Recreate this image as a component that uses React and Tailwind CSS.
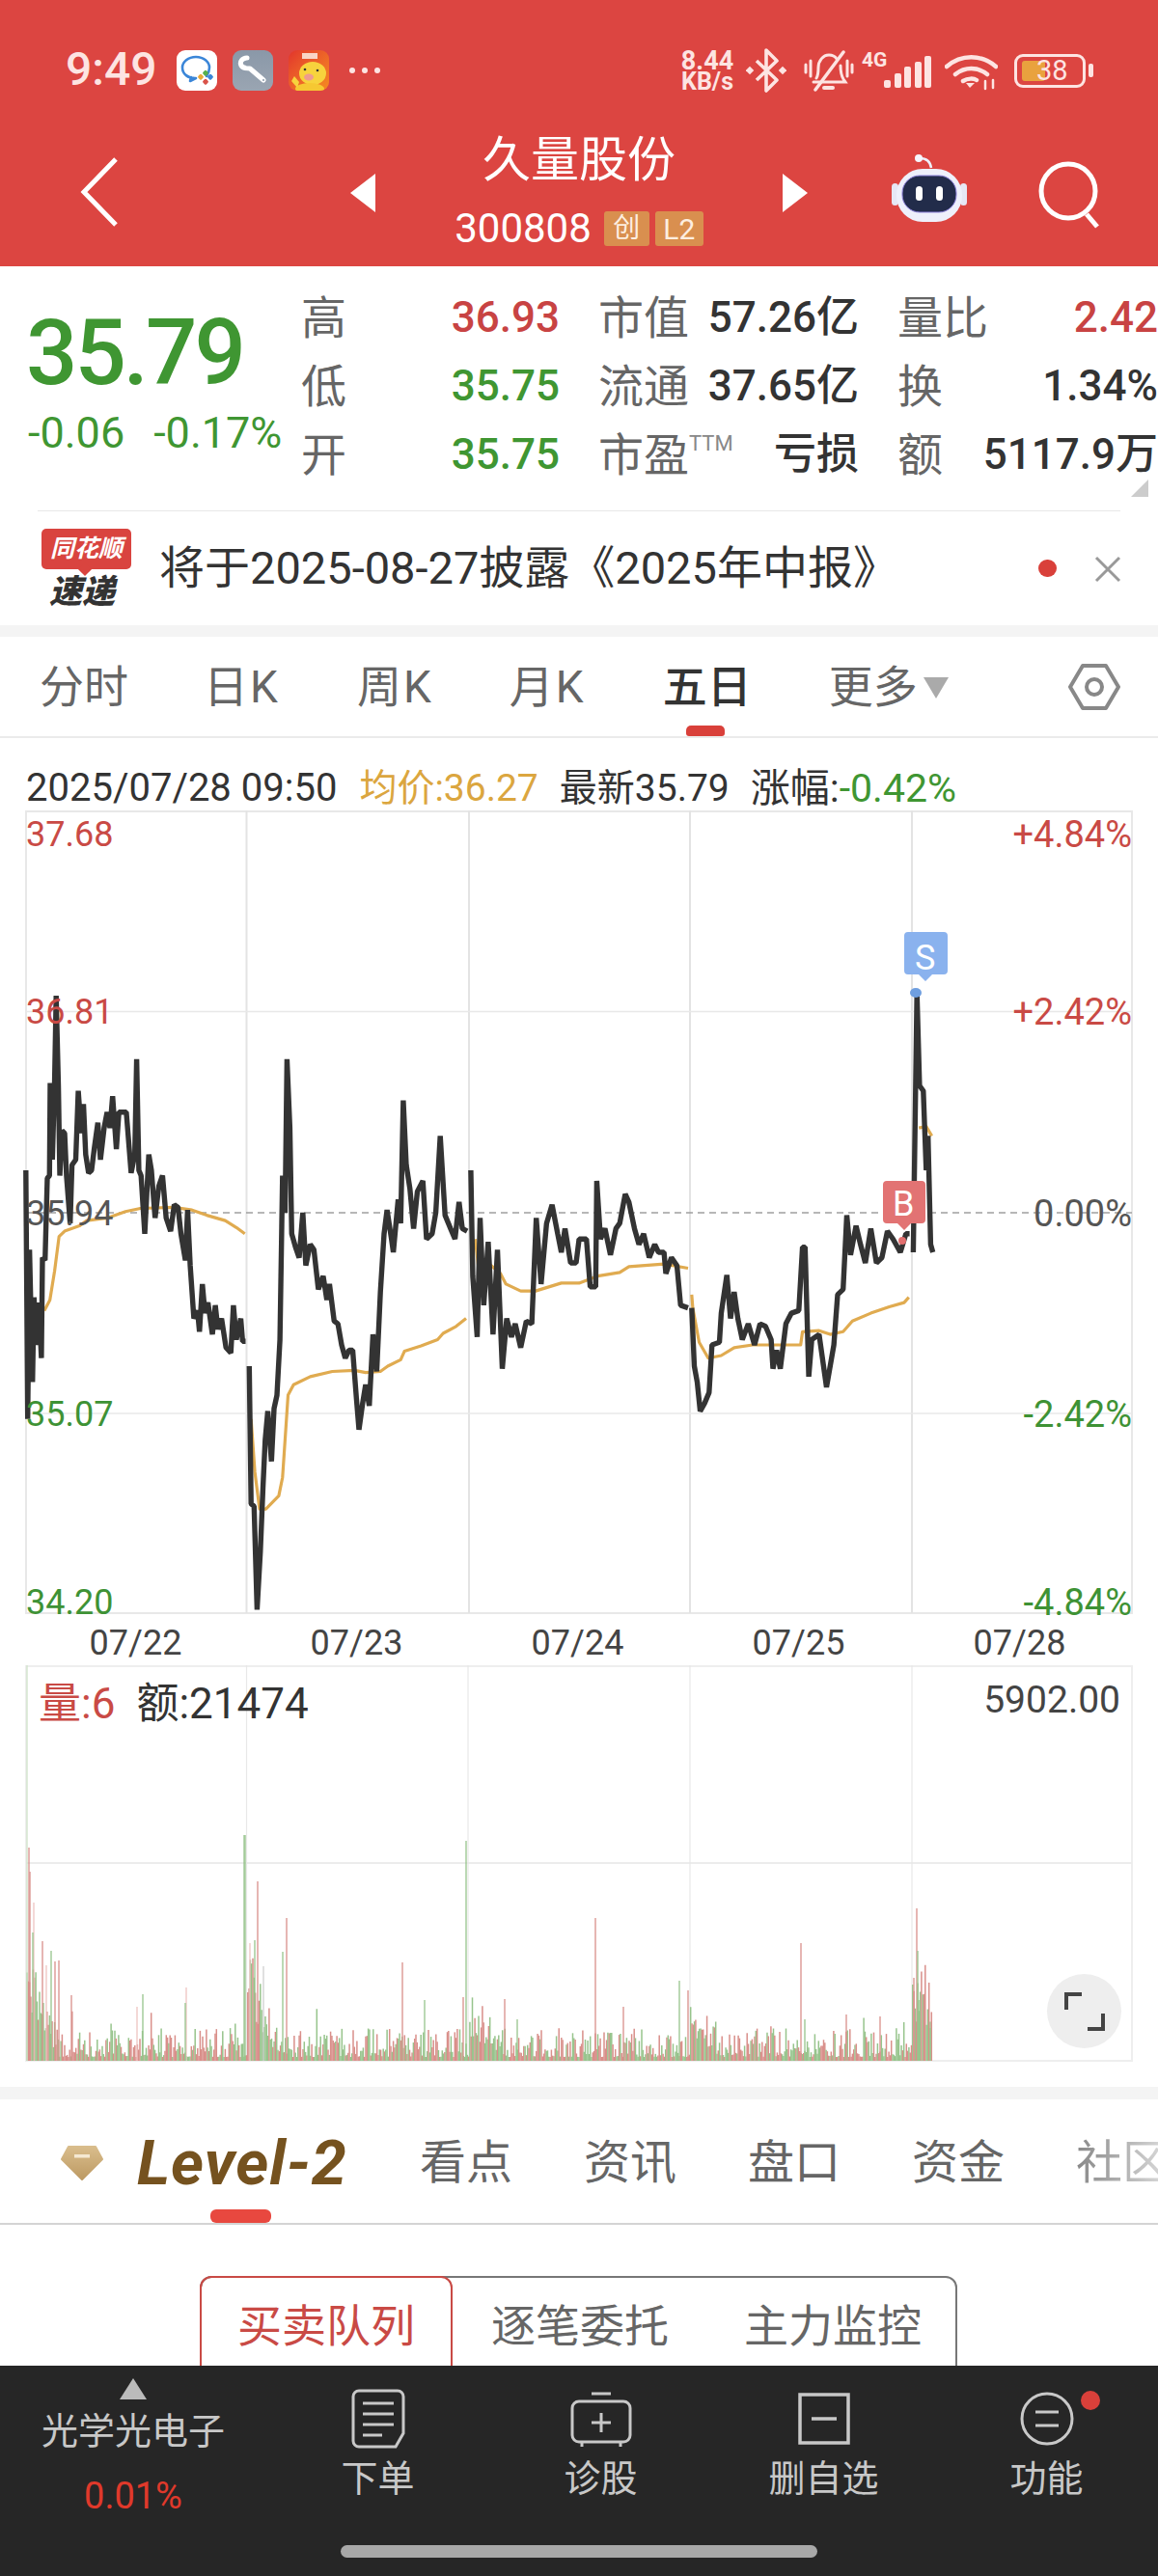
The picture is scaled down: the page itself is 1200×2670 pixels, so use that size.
import React from 'react';

const D1 = '70,680 75,1150 80,830 88,1080 92,920 100,1010 105,930 112,1035 115,845 122,850 128,695 134,690 136,515 142,660 148,510 152,350 158,520 162,690 168,605 175,610 180,690 190,780 195,670 205,660 212,530 220,610 226,555 232,650 240,685 248,680 255,640 265,590 272,660 282,600 290,570 298,600 305,540 315,640 322,570 335,570 342,570 355,685 365,650 370,470 376,680 382,690 392,800 403,650 410,680 420,770 430,710 440,690 450,770 462,795 472,745 482,750 490,800 502,850 508,755 515,860 525,960 535,945 540,985 548,895 555,950 563,930 575,990 583,935 590,980 600,960 612,1015 625,1025 632,935 640,1000 652,960 657,1003 665,1003';
const D2 = '675,1050 680,1310 688,1315 696,1510 705,1400 712,1280 718,1190 725,1135 735,1230 742,1130 750,1105 758,1000 765,690 772,760 777,470 785,600 790,800 800,825 810,845 820,760 828,860 840,820 850,830 862,905 875,880 885,925 892,895 905,965 915,970 925,1010 935,1035 945,1020 955,1020 965,1110 972,1170 982,1120 990,1085 1000,1125 1010,990 1020,1060 1030,910 1040,800 1048,755 1060,810 1065,835 1078,735 1085,780 1092,548 1100,670 1110,715 1120,790 1130,720 1145,700 1155,810 1170,800 1180,760 1192,615 1205,765 1220,790 1232,810 1243,740 1252,790 1265,795';
const D3 = '1275,680 1280,880 1292,995 1300,770 1310,935 1322,815 1335,990 1347,830 1360,1055 1372,960 1385,995 1395,970 1410,1015 1425,965 1440,970 1452,770 1465,895 1480,780 1495,745 1510,800 1520,835 1530,790 1545,855 1560,855 1568,810 1578,810 1588,810 1598,900 1613,900 1616,700 1626,810 1638,790 1653,840 1668,790 1678,780 1693,725 1703,740 1718,790 1730,820 1743,800 1758,845 1773,820 1783,835 1798,835 1803,875 1818,845 1833,860 1843,935 1863,940';
const D4 = '1873,940 1880,1050 1888,1080 1896,1135 1908,1120 1920,1100 1928,1010 1948,1005 1953,950 1968,878 1978,960 1988,910 1998,960 2010,1000 2026,970 2043,1010 2058,970 2073,975 2088,1000 2093,1055 2103,1020 2113,1055 2128,970 2143,950 2163,945 2173,825 2180,825 2190,1070 2198,1000 2218,990 2238,1090 2258,1010 2268,915 2283,905 2293,765 2303,840 2318,785 2330,820 2343,855 2358,790 2373,855 2388,845 2403,795 2418,810 2438,835 2453,800 2463,800';
const D5 = '2473,835 2483,345 2490,520 2500,530 2508,680 2513,615 2520,820 2526,835';
const A1 = '120,945 135,925 148,870 160,805 175,795 215,785 235,775 290,770 340,758 380,752 470,750 520,755 560,765 610,775 640,788 663,800';
const A2 = '680,1150 690,1250 703,1320 720,1320 755,1295 765,1260 780,1105 795,1085 840,1070 900,1060 960,1058 990,1062 1030,1060 1050,1050 1085,1038 1095,1022 1140,1012 1185,1000 1200,988 1235,975 1262,960';
const A3 = '1287,810 1295,860 1330,860 1355,875 1370,895 1410,908 1450,908 1520,893 1568,893 1618,880 1678,873 1703,862 1798,857 1863,865';
const A4 = '1873,915 1876,940 1893,1005 1918,1035 1953,1030 1988,1015 2038,1010 2168,1010 2173,985 2218,983 2248,990 2283,985 2308,965 2358,950 2408,938 2448,930 2461,920';
const A5 = '2488,600 2508,597 2523,615';

// zoom crop coords -> page coords
const toPage = (s) =>
  s.split(' ').map((p) => {
    const [x, y] = p.split(',').map(Number);
    return `${(x / 2.613).toFixed(1)},${(840 + y / 1.823).toFixed(1)}`;
  }).join(' ');

const spikes = [
  [28, 1726, 'l'], [30, 1915, 'r'], [31, 1940, 'r'], [35, 1972, 'p'], [34, 2003, 'g'], [44, 2012, 'r'], [53, 2022, 'g'], [48, 2037, 'p'],
  [57, 2033, 'r'], [61, 2032, 'r'], [74, 2068, 'r'], [148, 2067, 'g'], [142, 2080, 'p'], [193, 2060, 'p'], [192, 2076, 'g'],
  [253, 1902, 'g'], [254, 1902, 'g'], [267, 1950, 'r'], [259, 2014, 'p'], [264, 2011, 'g'], [273, 2038, 'x'], [297, 1988, 'r'], [293, 2023, 'g'],
  [417, 2034, 'r'], [440, 2073, 'g'], [483, 1908, 'g'], [480, 2070, 'r'], [523, 2072, 'r'], [536, 2093, 'g'], [617, 1988, 'r'], [646, 2080, 'r'],
  [704, 2053, 'g'], [713, 2063, 'r'], [830, 2014, 'r'], [834, 2093, 'g'], [877, 2088, 'r'], [912, 2090, 'r'],
  [950, 1978, 'r'], [951, 2022, 'g'], [947, 2050, 'r'], [952, 2073, 'g'], [964, 2102, 'g'],
];

const volumeBars = () => {
  const bars = [];
  let seed = 7;
  const rnd = () => {
    seed = (seed * 16807) % 2147483647;
    return seed / 2147483647;
  };
  const starts = [27, 256, 486, 715, 945];
  for (let x = 28; x < 966; x += 1.3) {
    const day = starts.filter((s) => s <= x).pop();
    const near = x - day;
    let decay = Math.max(0, 1 - near / 34);
    if (day === 945) decay = 0.8;
    if (day === 715 || day === 486) decay *= 0.5;
    const r = rnd();
    let h = 4 + r * r * 30 + decay * (35 + rnd() * 60);
    if (rnd() > 0.95) h += rnd() * 25;
    bars.push([x, h, rnd() > 0.5 ? 'r' : 'g']);
  }
  return bars;
};

const volColor = { r: '#d98f8a', g: '#97c48c', p: '#eec4c1', x: '#cfcfcf', l: '#cfe3c9' };

const MainChart = () => (
  <div className="relative h-[833px]">
    <svg width="1200" height="833" viewBox="0 840 1200 833" className="absolute inset-0">
      <rect x="27" y="841" width="1146" height="831" fill="none" stroke="#e8e8e8" strokeWidth="2" />
      {[255.5, 486, 715, 945].map((x) => (
        <line key={x} x1={x} x2={x} y1="840" y2="1672" stroke="#e3e3e3" strokeWidth="2" />
      ))}
      <line x1="27" x2="1173" y1="1048.5" y2="1048.5" stroke="#e8e8e8" strokeWidth="1.5" />
      <line x1="27" x2="1173" y1="1465" y2="1465" stroke="#e8e8e8" strokeWidth="1.5" />
      <line x1="27" x2="1173" y1="1257" y2="1257" stroke="#a0a0a0" strokeWidth="1.5" strokeDasharray="7 5" />
      {[A1, A2, A3, A4, A5].map((s, i) => (
        <polyline key={i} points={toPage(s)} fill="none" stroke="#e0ab50" strokeWidth="3.2" strokeLinejoin="round" />
      ))}
      {[D1, D2, D3, D4, D5].map((s, i) => (
        <polyline key={i} points={toPage(s)} fill="none" stroke="#333333" strokeWidth="5.4" strokeLinejoin="bevel" />
      ))}
      <ellipse cx="949" cy="1029" rx="6" ry="5" fill="#6f9fe0" />
      <circle cx="935" cy="1286" r="4" fill="#e26f6f" />
      <path d="M941 966h37a4 4 0 0 1 4 4v36a4 4 0 0 1-4 4h-12l-7 7-7-7h-11a4 4 0 0 1-4-4v-36a4 4 0 0 1 4-4z" fill="#8ab2ee" />
      <path d="M919 1224h36a4 4 0 0 1 4 4v36a4 4 0 0 1-4 4h-11l-7 7-7-7h-11a4 4 0 0 1-4-4v-36a4 4 0 0 1 4-4z" fill="#e27373" />
    </svg>
    <span className="absolute left-[948px] top-[131px] text-[36px] leading-[44px] text-white">S</span>
    <span className="absolute left-[925px] top-[386px] text-[36px] leading-[44px] text-white">B</span>
    <span className="absolute left-[27px] top-[4px] text-[36px] leading-[42px] text-[#c94a45]">37.68</span>
    <span className="absolute left-[27px] top-[188px] text-[36px] leading-[42px] text-[#c94a45]">36.81</span>
    <span className="absolute left-[27px] top-[397px] text-[36px] leading-[42px] text-[#555]">35.94</span>
    <span className="absolute left-[27px] top-[605px] text-[36px] leading-[42px] text-[#3e9235]">35.07</span>
    <span className="absolute left-[27px] top-[800px] text-[36px] leading-[42px] text-[#3e9235]">34.20</span>
    <span className="absolute right-[27px] top-[4px] text-[38px] leading-[42px] text-[#c94a45]">+4.84%</span>
    <span className="absolute right-[27px] top-[188px] text-[38px] leading-[42px] text-[#c94a45]">+2.42%</span>
    <span className="absolute right-[27px] top-[397px] text-[38px] leading-[42px] text-[#555]">0.00%</span>
    <span className="absolute right-[27px] top-[605px] text-[38px] leading-[42px] text-[#3e9235]">-2.42%</span>
    <span className="absolute right-[27px] top-[800px] text-[38px] leading-[42px] text-[#3e9235]">-4.84%</span>
  </div>
);

const VolumeChart = () => (
  <div className="relative h-[411px]">
    <svg width="1200" height="411" viewBox="0 1726 1200 411" className="absolute inset-0">
      <rect x="27" y="1727" width="1146" height="409" fill="none" stroke="#eeeeee" strokeWidth="2" />
      <line x1="27" x2="1173" y1="1931" y2="1931" stroke="#ececec" strokeWidth="2" />
      {[255.5, 485, 715, 945].map((x) => (
        <line key={x} x1={x} x2={x} y1="1726" y2="2136" stroke="#e8e8e8" strokeWidth="1.2" />
      ))}
      {volumeBars().map(([x, h, c], i) => (
        <line key={i} x1={x} x2={x} y1="2136" y2={2136 - h} stroke={volColor[c]} strokeWidth="1.5" />
      ))}
      {spikes.map(([x, y, c], i) => (
        <line key={i} x1={x} x2={x} y1="2136" y2={y} stroke={volColor[c]} strokeWidth="1.3" />
      ))}
    </svg>
    <div className="absolute left-[40px] top-[15px] flex items-center text-[44px] leading-[50px]">
      <span className="text-[#c94a45]">量:6</span>
      <span className="ml-[22px] text-[#333]">额:21474</span>
    </div>
    <span className="absolute right-[39px] top-[14px] text-[39px] leading-[44px] text-[#444]">5902.00</span>
    <div className="absolute left-[1085px] top-[320px] flex h-[77px] w-[77px] items-center justify-center rounded-full bg-[#eeeeee]">
      <svg width="44" height="44" viewBox="0 0 44 44" fill="none" stroke="#444" strokeWidth="4">
        <path d="M19 4H3v16M25 40h16V24" />
      </svg>
    </div>
  </div>
);

const StatusBar = () => (
  <div className="flex h-[142px] items-start pt-[52px] text-[#fde4e2]">
    <span className="ml-[68px] mt-[-3px] w-[115px] text-[48px] font-medium leading-[46px]">9:49</span>
    <div className="h-[42px] w-[42px] overflow-hidden rounded-[9px] bg-white">
      <svg width="42" height="42" viewBox="0 0 42 42" fill="none">
        <path d="M31 27c2-3 3-5 3-9 0-6-6-11-14-11S6 12 6 18c0 7 6 11 13 11l1 0-6 3 1-4" stroke="#3b86d8" strokeWidth="2.600" strokeLinecap="round" strokeLinejoin="round" />
        <rect x="23" y="25" width="5" height="5" rx="1.500" fill="#e9a93a" transform="rotate(45 25 27)" />
        <rect x="28" y="21" width="5" height="5" rx="1.500" fill="#57b04c" transform="rotate(45 30 23)" />
        <rect x="33" y="25" width="5" height="5" rx="1.500" fill="#3b86d8" transform="rotate(45 35 27)" />
        <rect x="28" y="30" width="5" height="5" rx="1.500" fill="#d9534a" transform="rotate(45 30 32)" />
      </svg>
    </div>
    <div className="ml-[16px] h-[42px] w-[42px] overflow-hidden rounded-[9px] bg-gradient-to-b from-[#8a98a8] to-[#9aa5b2]">
      <svg width="42" height="42" viewBox="0 0 42 42" fill="none">
        <path d="M15 8c-5 0-8 4-6 8 2 3 6 3 9 3l14 12" stroke="#fff" strokeWidth="5" strokeLinecap="round" strokeLinejoin="round" />
        <circle cx="32" cy="31" r="1" fill="#8a98a8" />
      </svg>
    </div>
    <div className="ml-[16px] h-[42px] w-[42px] overflow-hidden rounded-[9px] bg-gradient-to-br from-[#e2332c] to-[#f58a1f]">
      <svg width="42" height="42" viewBox="0 0 42 42">
        <rect x="14" y="3" width="16" height="6" fill="#fbe3d5" opacity="0.9" />
        <ellipse cx="25" cy="24" rx="14" ry="12" fill="#f7d33d" />
        <ellipse cx="22" cy="40" rx="15" ry="6" fill="#f6c832" />
        <path d="M3 32l3-5 5 6-2 6z" fill="#f7d33d" />
        <ellipse cx="21" cy="28" rx="5" ry="3.500" fill="#ee9c8e" />
        <circle cx="17" cy="20" r="1.300" fill="#333" />
        <circle cx="30" cy="21" r="1.300" fill="#333" />
      </svg>
    </div>
    <svg width="34" height="8" viewBox="0 0 34 8" className="ml-[20px] mt-[17px]" fill="#fde4e2">
      <circle cx="4" cy="4" r="3" />
      <circle cx="17" cy="4" r="3" />
      <circle cx="30" cy="4" r="3" />
    </svg>

    <div className="ml-[309px] flex w-[58px] flex-col items-center">
      <span className="text-[27px] font-bold leading-[22px]">8.44</span>
      <span className="text-[25px] font-bold leading-[22px]">KB/s</span>
    </div>
    <svg width="42" height="46" viewBox="0 0 42 46" fill="none" stroke="#fde4e2" strokeWidth="3.600" className="ml-[11px] mt-[-2px]">
      <path d="M11 13l21 20-11 11V2l11 11-21 20" strokeLinejoin="round" />
      <rect x="1" y="20" width="6" height="6" fill="#fde4e2" stroke="none" transform="rotate(45 4 23)" />
      <rect x="35" y="20" width="6" height="6" fill="#fde4e2" stroke="none" transform="rotate(45 38 23)" />
    </svg>
    <svg width="52" height="44" viewBox="0 0 52 44" fill="none" stroke="#fde4e2" strokeWidth="3" strokeLinecap="round" className="ml-[18px]">
      <path d="M13 29c2-3 2-6 2-11 0-7 5-13 11-13 3 0 6 1 8 4M38 16c0 5 0 9 3 14l2 3H10" />
      <path d="M21 39h9" strokeWidth="4" />
      <path d="M41 2L12 41" strokeWidth="3.500" />
      <path d="M2 15v8M7 11v16M45 11v16M50 15v8" />
    </svg>
    <div className="relative ml-[8px] h-[44px] w-[72px]">
      <span className="absolute left-[0px] top-[0px] text-[21px] font-bold leading-[20px]">4G</span>
      <div className="absolute bottom-[5px] right-[0px] flex items-end gap-[3.500px]">
        <div className="h-[8px] w-[7px] rounded-[2px] bg-[#fde4e2]" />
        <div className="h-[15px] w-[7px] rounded-[2px] bg-[#fde4e2]" />
        <div className="h-[22px] w-[7px] rounded-[2px] bg-[#fde4e2]" />
        <div className="h-[27px] w-[7px] rounded-[2px] bg-[#fde4e2]" />
        <div className="h-[33px] w-[7px] rounded-[2px] bg-[#fde4e2]" />
      </div>
    </div>
    <svg width="55" height="38" viewBox="0 0 55 38" fill="none" stroke="#fde4e2" strokeWidth="4.500" strokeLinecap="round" className="ml-[14px] mt-[4px]">
      <path d="M2 13c15-13 36-13 51 0M11 21c10-8 23-8 33 0M19 28c5-3 11-3 14-1" />
      <path d="M22 30l4 5 5-5z" fill="#fde4e2" stroke="none" />
      <path d="M42 28v8M50 27v8" strokeWidth="2.500" />
    </svg>
    <div className="relative ml-[17px] mt-[4px] h-[35px] w-[74px] rounded-[9px] border-[3px] border-[#fde4e2]">
      <div className="absolute bottom-[4px] left-[5px] top-[4px] w-[24px] rounded-[3px] bg-[#e9a23e]" />
      <span className="absolute left-[20px] top-[-1px] text-[29px] leading-[30px]">38</span>
      <div className="absolute right-[-11px] top-[7px] h-[14px] w-[5px] rounded-[2px] bg-[#fde4e2]" />
    </div>
  </div>
);

const NavBar = () => (
  <div className="relative flex h-[134px] items-start justify-center">
    <svg width="44" height="74" viewBox="0 0 44 74" fill="none" stroke="#fff" strokeWidth="5" className="absolute left-[81px] top-[20px]">
      <path d="M39 3L6 37l33 34" />
    </svg>
    <svg width="26" height="40" viewBox="0 0 26 40" className="absolute left-[363px] top-[38px]" fill="#fff"><path d="M26 0v40L0 20z" /></svg>
    <svg width="26" height="40" viewBox="0 0 26 40" className="absolute left-[811px] top-[38px]" fill="#fff"><path d="M0 0v40l26-20z" /></svg>
    <div className="mt-[-7px] flex flex-col items-center">
      <span className="text-[50px] leading-[62px] text-white">久量股份</span>
      <div className="mt-[21px] flex items-center">
        <span className="text-[42px] leading-[38px] text-white">300808</span>
        <span className="ml-[13px] flex h-[36px] w-[47px] items-center justify-center rounded-[3px] bg-[#d98f4f] text-[28px] text-[#fdeee0]">创</span>
        <span className="ml-[6px] flex h-[36px] w-[50px] items-center justify-center rounded-[3px] bg-[#d98f4f] text-[30px] text-[#fdeee0]">L2</span>
      </div>
    </div>
    <svg width="86" height="74" viewBox="0 0 86 74" className="absolute left-[920px] top-[18px]">
      <path d="M33 4c7 0 11 3 12 10" fill="none" stroke="#eef0fb" strokeWidth="2.500" />
      <circle cx="32" cy="4" r="4" fill="#f6f6fd" />
      <rect x="4" y="30" width="7" height="23" rx="3.500" fill="#e6e7f5" />
      <rect x="75" y="30" width="7" height="23" rx="3.500" fill="#e6e7f5" />
      <rect x="9" y="15" width="68" height="55" rx="27" fill="#eef0fb" />
      <rect x="15" y="22" width="56" height="38" rx="18" fill="#222c4a" stroke="#8f84dc" strokeWidth="1" />
      <rect x="29" y="33" width="7" height="15" rx="3.500" fill="#fff" />
      <rect x="50" y="33" width="7" height="15" rx="3.500" fill="#fff" />
    </svg>
    <svg width="68" height="72" viewBox="0 0 68 72" fill="none" stroke="#fff" strokeWidth="5" className="absolute left-[1075px] top-[23px]">
      <circle cx="32" cy="33" r="28" />
      <path d="M51 57l11 13" />
    </svg>
  </div>
);

const Label = ({ children }) => <span className="whitespace-nowrap text-[47px] leading-[71px] text-[#666]">{children}</span>;
const Value = ({ color, children }) => <span className={`text-[44px] font-medium leading-[71px] ${color}`}>{children}</span>;

const QuoteSection = () => (
  <div className="relative h-[254px] bg-white">
    <div className="flex h-[237px] pt-[18px]">
      <div className="ml-[27px] w-[285px] pt-[24px]">
        <div className="text-[94px] font-medium leading-[96px] tracking-[-3px] text-[#3f9632]">35.79</div>
        <div className="ml-[2px] mt-[12px] flex whitespace-nowrap text-[45px] leading-[46px] text-[#3f9632]">
          <span>-0.06</span>
          <span className="ml-[30px]">-0.17%</span>
        </div>
      </div>
      <div className="grid flex-1 grid-cols-[268px_350px_270px] grid-rows-[71px_71px_71px]">
        <div className="flex justify-between">
          <Label>高</Label>
          <Value color="text-[#c84343]">36.93</Value>
        </div>
        <div className="ml-[40px] flex justify-between pr-[40px]">
          <Label>市值</Label>
          <Value color="text-[#333]">57.26亿</Value>
        </div>
        <div className="flex justify-between">
          <Label>量比</Label>
          <Value color="text-[#c84343]">2.42</Value>
        </div>
        <div className="flex justify-between">
          <Label>低</Label>
          <Value color="text-[#3f9632]">35.75</Value>
        </div>
        <div className="ml-[40px] flex justify-between pr-[40px]">
          <Label>流通</Label>
          <Value color="text-[#333]">37.65亿</Value>
        </div>
        <div className="flex justify-between">
          <Label>换</Label>
          <Value color="text-[#333]">1.34%</Value>
        </div>
        <div className="flex justify-between">
          <Label>开</Label>
          <Value color="text-[#3f9632]">35.75</Value>
        </div>
        <div className="ml-[40px] flex justify-between pr-[40px]">
          <span className="flex items-start">
            <Label>市盈</Label>
            <span className="mt-[12px] text-[22px] leading-[24px] text-[#888]">TTM</span>
          </span>
          <Value color="text-[#333]">亏损</Value>
        </div>
        <div className="flex justify-between">
          <Label>额</Label>
          <Value color="text-[#333]">5117.9万</Value>
        </div>
      </div>
    </div>
    <div className="absolute bottom-[15px] right-[10px] h-0 w-0 border-b-[18px] border-l-[18px] border-b-[#cccccc] border-l-transparent" />
    <div className="absolute bottom-[0px] left-[39px] right-[39px] h-[1px] bg-[#e8e8e8]" />
  </div>
);

const Notice = () => (
  <div className="relative flex h-[118px] items-center bg-white pl-[43px]">
    <div className="flex w-[93px] flex-col items-start">
      <div className="relative flex h-[42px] w-[93px] items-center justify-center rounded-[5px] bg-[#d9443f] text-[25px] font-bold italic leading-[42px] text-white">
        同花顺
        <div className="absolute bottom-[-5px] left-[40px] h-[10px] w-[10px] rotate-45 bg-[#d9443f]" />
      </div>
      <div className="mt-[6px] pl-[8px] text-[34px] font-black italic leading-[34px] text-[#333]">速递</div>
    </div>
    <span className="ml-[29px] text-[47px] leading-[60px] text-[#333]">将于2025-08-27披露《2025年中报》</span>
    <div className="absolute left-[1076px] top-[50px] h-[18px] w-[19px] rounded-full bg-[#d9403a]" />
    <svg width="28" height="28" viewBox="0 0 28 28" fill="none" stroke="#999" strokeWidth="3" className="absolute left-[1134px] top-[46px]">
      <path d="M2 2l24 24M26 2L2 26" />
    </svg>
  </div>
);

const PeriodTabs = () => (
  <div className="relative h-[105px] border-b-2 border-[#ebebeb] bg-white text-[46px] leading-[105px] text-[#666]">
    <div className="flex h-[103px]">
      <span className="ml-[41px]">分时</span>
      <span className="ml-[78px] tracking-[2px]">日K</span>
      <span className="ml-[80px] tracking-[2px]">周K</span>
      <span className="ml-[79px] tracking-[2px]">月K</span>
      <span className="ml-[80px] font-medium text-[#333]">五日</span>
      <span className="ml-[80px]">更多</span>
      <svg width="26" height="22" viewBox="0 0 26 22" className="ml-[6px] mt-[42px]" fill="#aaa"><path d="M0 0h26L13 22z" /></svg>
    </div>
    <div className="absolute bottom-[0px] left-[711px] h-[11px] w-[40px] rounded-t-[5px] rounded-b-[3px] bg-[#d9403a]" />
    <svg width="54" height="50" viewBox="0 0 54 50" fill="none" stroke="#888" strokeWidth="4" className="absolute left-[1107px] top-[27px]">
      <path d="M15 3h24l13 22-13 22H15L2 25z" strokeLinejoin="round" />
      <circle cx="27" cy="25" r="8" />
    </svg>
  </div>
);

const InfoRow = () => (
  <div className="flex h-[75px] items-start pl-[27px] pt-[27px] text-[39px] leading-[50px] text-[#333]">
    <span className="text-[40px]">2025/07/28 09:50</span>
    <span className="ml-[23px] text-[#dba63f]">均价:36.27</span>
    <span className="ml-[22px]">最新35.79</span>
    <span className="ml-[22px] text-[41px]">涨幅:<span className="text-[#3f9632]">-0.42%</span></span>
  </div>
);

const DateRow = () => (
  <div className="grid h-[53px] grid-cols-[repeat(5,229px)] pl-[26px] text-center text-[36px] leading-[60px] text-[#444]">
    <span>07/22</span>
    <span>07/23</span>
    <span>07/24</span>
    <span>07/25</span>
    <span>07/28</span>
  </div>
);

const DetailTabs = () => (
  <div className="relative flex h-[130px] items-center overflow-hidden whitespace-nowrap border-b-2 border-[#d4d4d4] bg-white pt-[4px] text-[48px] text-[#666]">
    <svg width="46" height="40" viewBox="0 0 46 40" className="ml-[62px] shrink-0">
      <defs>
        <linearGradient id="gem" x1="0" y1="0" x2="0" y2="1">
          <stop offset="0" stopColor="#d9bd8c" />
          <stop offset="1" stopColor="#bd9a63" />
        </linearGradient>
      </defs>
      <path d="M9 3h28l7 13-21 21L2 16z" fill="url(#gem)" stroke="url(#gem)" strokeWidth="2" strokeLinejoin="round" />
      <rect x="15" y="11" width="16" height="3.500" fill="#f5e9d2" />
    </svg>
    <span className="ml-[34px] w-[293px] shrink-0 text-[65px] font-bold italic leading-[70px] tracking-[1px] text-[#75521f]">Level-2</span>
    <span className="shrink-0">看点</span>
    <span className="ml-[74px] shrink-0">资讯</span>
    <span className="ml-[74px] shrink-0">盘口</span>
    <span className="ml-[74px] shrink-0">资金</span>
    <span className="ml-[74px] shrink-0 bg-gradient-to-r from-[#888] to-[#ddd] bg-clip-text text-transparent">社区</span>
    <div className="absolute bottom-[0px] left-[218px] h-[14px] w-[63px] rounded-[6px] bg-[#e8483f]" />
  </div>
);

const SegmentTabs = () => (
  <div className="mt-[53px] ml-[207px] flex h-[120px] w-[785px] rounded-t-[12px] border-2 border-[#777] text-[46px] leading-[100px] text-[#666]">
    <div className="ml-[-2px] mt-[-2px] h-[122px] w-[262px] rounded-t-[12px] border-2 border-[#c94a45] text-center text-[#c94a45]">买卖队列</div>
    <span className="ml-[40px]">逐笔委托</span>
    <span className="ml-[78px]">主力监控</span>
  </div>
);

const BottomBar = () => (
  <div className="absolute bottom-[0px] left-[0px] h-[218px] w-full bg-[#262626] text-[38px] text-[#c8c8c8]">
    <div className="grid grid-cols-[276px_repeat(4,231px)]">
      <div className="flex flex-col items-center">
        <svg width="28" height="22" viewBox="0 0 28 22" className="mt-[13px]" fill="#bbb"><path d="M14 0l14 22H0z" /></svg>
        <span className="mt-[8px] leading-[50px]">光学光电子</span>
        <span className="mt-[17px] leading-[50px] text-[#e0392b]">0.01%</span>
      </div>
      <div className="flex flex-col items-center">
        <svg width="56" height="62" viewBox="0 0 56 62" fill="none" stroke="#c8c8c8" strokeWidth="3" className="mt-[24px]">
          <path d="M8 2h40a6 6 0 0 1 6 6v38l-8 14H8a6 6 0 0 1-6-6V8a6 6 0 0 1 6-6z" />
          <path d="M12 15h32M12 26h32M12 37h32M12 48h20" />
        </svg>
        <span className="mt-[6px] leading-[50px]">下单</span>
      </div>
      <div className="flex flex-col items-center">
        <svg width="64" height="60" viewBox="0 0 64 60" fill="none" stroke="#c8c8c8" strokeWidth="3" className="mt-[26px]">
          <path d="M22 3h20" />
          <rect x="2" y="11" width="60" height="42" rx="7" />
          <path d="M32 23v20M22 33h20M12 53v5M52 53v5" />
        </svg>
        <span className="mt-[6px] leading-[50px]">诊股</span>
      </div>
      <div className="flex flex-col items-center">
        <svg width="54" height="54" viewBox="0 0 54 54" fill="none" stroke="#c8c8c8" strokeWidth="3.500" className="mt-[28px]">
          <rect x="2" y="2" width="50" height="50" />
          <path d="M14 27h26" />
        </svg>
        <span className="mt-[10px] leading-[50px]">删自选</span>
      </div>
      <div className="relative flex flex-col items-center">
        <svg width="58" height="58" viewBox="0 0 58 58" fill="none" stroke="#c8c8c8" strokeWidth="3" className="mt-[26px]">
          <circle cx="29" cy="29" r="26" />
          <path d="M17 22h24M17 36h24" />
        </svg>
        <span className="mt-[8px] leading-[50px]">功能</span>
        <div className="absolute left-[151px] top-[26px] h-[20px] w-[20px] rounded-full bg-[#d9403a]" />
      </div>
    </div>
    <div className="absolute bottom-[19px] left-[353px] h-[13px] w-[494px] rounded-full bg-[#a8a8a8]" />
  </div>
);

const App = () => {
  return (
    <div className="relative h-[2670px] w-[1200px] overflow-hidden bg-white font-['Roboto','Noto_Sans_CJK_SC',sans-serif]">
      <div className="h-[276px] bg-[#dc4541]">
        <StatusBar />
        <NavBar />
      </div>
      <QuoteSection />
      <Notice />
      <div className="h-[12px] bg-[#f4f4f4]" />
      <PeriodTabs />
      <InfoRow />
      <MainChart />
      <DateRow />
      <VolumeChart />
      <div className="h-[26px]" />
      <div className="h-[13px] bg-[#f4f4f4]" />
      <DetailTabs />
      <SegmentTabs />
      <BottomBar />
    </div>
  );
};

export default App;
